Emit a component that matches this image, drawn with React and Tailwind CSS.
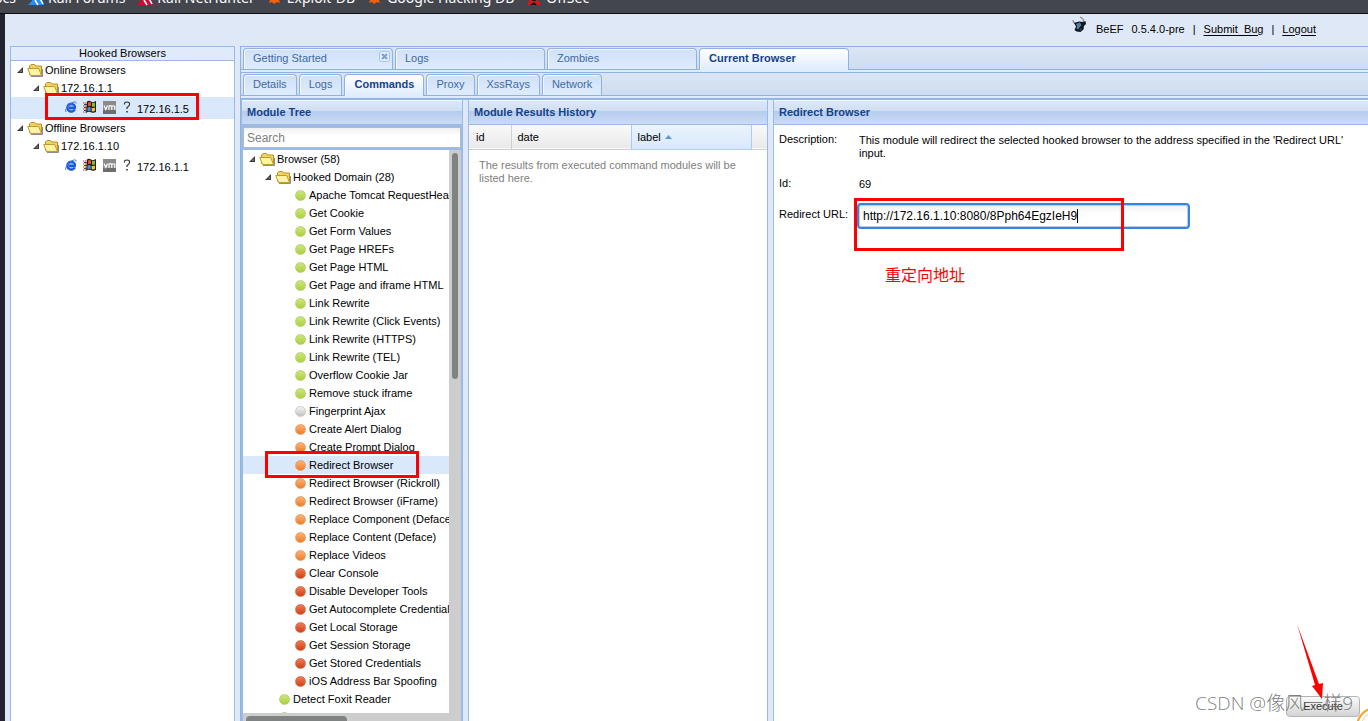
import React, {useState} from 'react';

const mainTabs = ['Getting Started', 'Logs', 'Zombies', 'Current Browser']
const subTabs = ['Details', 'Logs', 'Commands', 'Proxy', 'XssRays', 'Network']

const modules = [
  {name: 'Apache Tomcat RequestHeader Example', status: 'green'},
  {name: 'Get Cookie', status: 'green'},
  {name: 'Get Form Values', status: 'green'},
  {name: 'Get Page HREFs', status: 'green'},
  {name: 'Get Page HTML', status: 'green'},
  {name: 'Get Page and iframe HTML', status: 'green'},
  {name: 'Link Rewrite', status: 'green'},
  {name: 'Link Rewrite (Click Events)', status: 'green'},
  {name: 'Link Rewrite (HTTPS)', status: 'green'},
  {name: 'Link Rewrite (TEL)', status: 'green'},
  {name: 'Overflow Cookie Jar', status: 'green'},
  {name: 'Remove stuck iframe', status: 'green'},
  {name: 'Fingerprint Ajax', status: 'grey'},
  {name: 'Create Alert Dialog', status: 'orange'},
  {name: 'Create Prompt Dialog', status: 'orange'},
  {name: 'Redirect Browser', status: 'orange'},
  {name: 'Redirect Browser (Rickroll)', status: 'orange'},
  {name: 'Redirect Browser (iFrame)', status: 'orange'},
  {name: 'Replace Component (Deface)', status: 'orange'},
  {name: 'Replace Content (Deface)', status: 'orange'},
  {name: 'Replace Videos', status: 'orange'},
  {name: 'Clear Console', status: 'red'},
  {name: 'Disable Developer Tools', status: 'red'},
  {name: 'Get Autocomplete Credentials', status: 'red'},
  {name: 'Get Local Storage', status: 'red'},
  {name: 'Get Session Storage', status: 'red'},
  {name: 'Get Stored Credentials', status: 'red'},
  {name: 'iOS Address Bar Spoofing', status: 'red'},
]

const statusColors = {
  green: 'from-[#cfe57c] to-[#a9d135] border-[#b9cf7c]',
  grey: 'from-[#f4f4f4] to-[#c2c2c2] border-[#cccccc]',
  orange: 'from-[#fbb273] to-[#f07c1c] border-[#e5a272]',
  red: 'from-[#ee7a55] to-[#d23d0c] border-[#d4755a]',
}

const Arrow = () => (
  <svg className={'w-4 h-4 shrink-0'} viewBox="0 0 16 16">
    <path d="M12 5v6H6z" fill="#3a3a3a"/>
    <path d="M11 7.500v2.500H8.500z" fill="#777"/>
  </svg>
)

const Folder = () => (
  <svg className={'w-4 h-4 shrink-0'} viewBox="0 0 16 16">
    <path d="M15.500 7v7.500H4" fill="none" stroke="#8d8d8d"/>
    <path d="M2.500 12.500V4L4 2.500h3.500L9 4h5.500v9.500h-11z" fill="#f0d35c" stroke="#b8902a"/>
    <path d="M3.500 13.500L.7 6.500h11l2.800 7z" fill="#fff3a6" stroke="#c39a30"/>
  </svg>
)

const Explorer = () => (
  <svg className={'w-3 h-3'} viewBox="0 0 12 12">
    <circle cx="6" cy="6.500" r="5" fill="#8db8f5"/>
    <path d="M9.800 8.500A3.900 3.900 0 1 1 10 5.500L9.800 6.800H4" fill="none" stroke="#1e58d6" strokeWidth="2.200"/>
    <path d="M1 11C-.5 9 3 4 7 1.800C9 .6 11.500 .3 11 2.600" fill="none" stroke="#3f7ce4"/>
  </svg>
)

const Windows = () => (
  <svg className={'w-[14px] h-[14px]'} viewBox="0 0 14 14">
    <path d="M4 1.500Q6 0 8 1.500T13 1v11q-2.500 1.500-5 .3T3 13z" fill="#221d18"/>
    <path d="M5 2.500q1.500-1 3 0v3.800q-1.500-1-3 0z" fill="#f0501c"/>
    <path d="M9 2.800q1.500 .6 3-.2v3.800q-1.500 .8-3 .2z" fill="#7cc034"/>
    <path d="M4.500 7.500q1.500-1 3.200 0v3.700q-1.500-1-3.200 0z" fill="#4a8bea"/>
    <path d="M8.700 7.700q1.500 .6 3.200-.2v3.600q-1.500 .8-3.200 .2z" fill="#f7c72e"/>
    <path d="M0 3h4M0 6h4M0 9h4M0 12h4" stroke="#d2401c" strokeDasharray="1.500 .5"/>
    <path d="M1 4.500h3M1 7.500h3M1 10.500h3" stroke="#444"/>
  </svg>
)

const VmWare = () => (
  <svg className={'w-[13px] h-[13px]'} viewBox="0 0 13 13">
    <path d="M0 0h13v13H0z" fill="#8b8b8b"/>
    <path d="M0 9h13v4H0z" fill="#6d6d6d"/>
    <path d="M1 4.500l1.800 4L4.500 4.500M6 9V5q1.500-.8 2.800 .5V9V5.500Q10.500 4 11.800 5.500V9" fill="none" stroke="#fff" strokeWidth="1.200"/>
  </svg>
)

const Question = () => (
  <svg className={'w-2 h-3'} viewBox="0 0 8 12">
    <path d="M1.500 3.500Q1 1 4 1T6.500 3.500Q6.500 5 4 6.500V8" fill="none" stroke="#333" strokeWidth="1.200"/>
    <path d="M3.200 10h1.600v1.500H3.200z" fill="#333"/>
  </svg>
)

const BullLogo = () => (
  <svg className={'w-4 h-[17px]'} viewBox="0 0 16 17">
    <path d="M1 4Q1 8 5 7M11 6Q13 3.500 8 1" fill="none" stroke="#8a8f95" strokeWidth="1.300"/>
    <path d="M2 7L7 5.500l4 .5L13.500 5l.5 3-2 2-.5 3.500-3 2.500-4-.5L2.500 14l1.500-3.500z" fill="#101722"/>
    <path d="M4 8L8 6.500 9.500 9 7.500 11.500 6 13.500l-1.500-1 .5-2.500z" fill="#4d7f9d"/>
    <path d="M9 12l1 2L7.500 15z" fill="#3b4650"/>
  </svg>
)

const KaliMark = ({color}) => (
  <svg className={'w-4 h-4'} viewBox="0 0 16 16">
    <path d="M3 1h8l5 14H0l4-4z" fill={color}/>
    <path d="M4 3q6 1 11 11M7 10l3 5" fill="none" stroke="#fff" strokeWidth="1.500"/>
  </svg>
)

const BugMark = () => (
  <svg className={'w-4 h-4'} viewBox="0 0 16 16">
    <path d="M3 6l4 1 4-3 1 3 3 1-3 2 1 3-3-1-3 2-2-2-3 1 1-3-2-2z" fill="#f2600c"/>
  </svg>
)

const OffSecMark = () => (
  <svg className={'w-4 h-4'} viewBox="0 0 16 16">
    <path d="M7 1L15 15H1z" fill="#d8131b"/>
    <path d="M8 7l2 4H6zM4 15l4-3 3 3z" fill="#111"/>
  </svg>
)

const bookmarks = [
  {name: 'Kali Forums', icon: <KaliMark color="#2b8cf0"/>},
  {name: 'Kali NetHunter', icon: <KaliMark color="#c4122f"/>},
  {name: 'Exploit-DB', icon: <BugMark/>},
  {name: 'Google Hacking DB', icon: <BugMark/>},
  {name: 'OffSec', icon: <OffSecMark/>},
]

const TreeBranch = ({name, indent}) => (
  <div className={'flex h-[18px] items-center ' + (indent ? 'pl-4' : '')}>
    <Arrow/>
    <Folder/>
    <span className={'pl-0.5 whitespace-nowrap'}>{name}</span>
  </div>
)

const Zombie = ({ip, selected}) => (
  <div className={'flex h-[22px] pl-[54px] ' + (selected ? 'bg-[#d9e8fb]' : '')}>
    <span className={'flex h-5 items-center'}>
      <span className={'w-[18px]'}><Explorer/></span>
      <span className={'w-5'}><Windows/></span>
      <span className={'w-5'}><VmWare/></span>
      <span className={'w-[14px]'}><Question/></span>
    </span>
    <span className={'self-end leading-5'}>{ip}</span>
  </div>
)

const Module = ({name, status, selected, indent}) => (
  <div className={'flex h-[18px] items-center ' + (indent ? 'pl-[52px] ' : 'pl-9 ') + (selected ? 'bg-[#d9e8fb]' : '')}>
    <span className={'w-[11px] h-[11px] mt-px shrink-0 rounded-full border bg-linear-to-b ' + statusColors[status]}/>
    <span className={'pl-[3px] whitespace-nowrap'}>{name}</span>
  </div>
)

const Panel = ({title, className, children}) => (
  <section className={'flex flex-col min-w-0 border-[#99bbe8] bg-white ' + className}>
    <h2 className={'h-[25px] shrink-0 border-b border-[#99bbe8] bg-[linear-gradient(#dfe9f6,#cfdff2_44%,#b5ccee_46%,#cbdbf3)] pl-[5px] font-bold leading-[24px] text-[#15428b] shadow-[inset_0_1px_0_#f2f7fd]'}>
      {title}
    </h2>
    {children}
  </section>
)

const App = () => {
  const [tab, setTab] = useState('Current Browser')
  const [subTab, setSubTab] = useState('Commands')
  const [selected, setSelected] = useState('Redirect Browser')
  const [url, setUrl] = useState('http://172.16.1.10:8080/8Pph64EgzIeH9')

  return (
    <div className={"relative flex h-screen flex-col overflow-hidden bg-[#dfe8f6] text-[11px] text-black font-['Liberation_Sans',Arial,sans-serif]"}>
      <nav className={"flex h-[14px] shrink-0 items-end overflow-hidden border-b border-[#0c0c0e] bg-[#44464e] text-sm text-[#fbfbfe] font-['Noto_Sans',sans-serif]"}>
        <div className={'flex h-[30px] items-center gap-3'}>
          <a href="#docs" className={'w-4 overflow-hidden [direction:rtl] whitespace-nowrap'}>Kali Docs</a>
          {
            bookmarks.map(item => (
              <a key={item.name} href="#bookmark" className={'flex items-center gap-1 whitespace-nowrap'}>
                {item.icon}
                {item.name}
              </a>
            ))
          }
        </div>
      </nav>

      <div className={'flex min-h-0 flex-1 flex-col border-l-[5px] border-[#21232e]'}>
        <header className={'flex h-8 shrink-0 items-center justify-end gap-2 pr-[52px] pb-0.5'}>
          <span className={'self-start pt-0.5'}><BullLogo/></span>
          <span>BeEF</span>
          <span>0.5.4.0-pre</span>
          <span>|</span>
          <a href="#bug" className={'underline whitespace-pre underline-offset-2'}>Submit  Bug</a>
          <span>|</span>
          <a href="#logout" className={'underline underline-offset-2'}>Logout</a>
        </header>

        <div className={'flex min-h-0 flex-1 gap-[5px] pl-[5px]'}>
          <aside className={'flex w-[225px] shrink-0 flex-col border border-b-0 border-[#99bbe8] bg-white'}>
            <h2 className={'h-[14px] shrink-0 border-b border-[#99bbe8] bg-[#dfebfb] text-center leading-[13px]'}>
              Hooked Browsers
            </h2>
            <TreeBranch name="Online Browsers"/>
            <TreeBranch name="172.16.1.1" indent/>
            <Zombie ip="172.16.1.5" selected/>
            <TreeBranch name="Offline Browsers"/>
            <TreeBranch name="172.16.1.10" indent/>
            <Zombie ip="172.16.1.1"/>
          </aside>

          <main className={'flex min-w-0 flex-1 flex-col border-t border-l border-[#8db2e3]'}>
            <div className={'flex h-[26px] shrink-0 items-start gap-0.5 border-b border-[#8db2e3] bg-linear-to-b from-[#dce6f5] to-[#cbdbef] pt-px pl-0.5 shadow-[inset_0_-2px_0_#deecfd,inset_0_-3px_0_#8db2e3]'}>
              {
                mainTabs.map((name, key) => (
                  <button key={name}
                          onClick={() => setTab(name)}
                          className={'flex w-[150px] items-start justify-between rounded-t border border-b-0 border-[#8db2e3] pl-[9px] pr-0.5 text-left leading-[19px] shadow-[inset_1px_1px_0_#f5f9ff] bg-linear-to-b ' + (tab === name ? 'h-[22px] from-white to-[#deecfd] font-bold text-[#15428b]' : 'h-[21px] from-[#d0e0f6] to-[#deecfd] text-[#416aa3]')}>
                    {name}
                    {
                      key === 0 && (
                        <svg className={'mt-0.5 w-[11px] h-[11px]'} viewBox="0 0 11 11">
                          <rect x=".5" y=".5" width="10" height="10" rx="2" fill="#e6effb" stroke="#a6c3ea"/>
                          <path d="M3 3l5 5M8 3L3 8" stroke="#7a9fd2" strokeWidth="2"/>
                        </svg>
                      )
                    }
                  </button>
                ))
              }
            </div>
            <div className={'flex h-[26px] shrink-0 items-start gap-0.5 border-b border-[#8db2e3] bg-linear-to-b from-[#dce6f5] to-[#cbdbef] pt-px pl-0.5 shadow-[inset_0_-2px_0_#deecfd,inset_0_-3px_0_#8db2e3]'}>
              {
                subTabs.map(name => (
                  <button key={name}
                          onClick={() => setSubTab(name)}
                          className={'flex items-start rounded-t border border-b-0 border-[#8db2e3] px-[9px] leading-[19px] shadow-[inset_1px_1px_0_#f5f9ff] bg-linear-to-b ' + (subTab === name ? 'h-[22px] from-white to-[#deecfd] font-bold text-[#15428b]' : 'h-[21px] from-[#d0e0f6] to-[#deecfd] text-[#416aa3]')}>
                    {name}
                  </button>
                ))
              }
            </div>

            <div className={'flex min-h-0 flex-1 gap-[5px] border-t border-[#99bbe8]'}>
              <Panel title="Module Tree" className={'w-[222px] shrink-0 border-x'}>
                <div className={'flex min-h-0 flex-1 flex-col border-x border-t-2 border-[#99bbe8] bg-[#99bbe8]'}>
                  <input aria-label="Search" placeholder="Search"
                         className={'mb-0.5 h-[21px] w-full shrink-0 border border-[#b5b8c8] bg-linear-to-b from-[#f0f0f0] to-white to-40% px-[3px] text-xs outline-none placeholder:text-[#808080]'}/>
                  <div className={'flex min-h-0 flex-1 bg-[#cdcdcd]'}>
                    <div className={'flex min-w-0 flex-1 flex-col'}>
                      <div className={'min-h-0 flex-1 overflow-hidden bg-white'}>
                        <TreeBranch name="Browser (58)"/>
                        <TreeBranch name="Hooked Domain (28)" indent/>
                        {
                          modules.map(item => (
                            <div key={item.name} onClick={() => setSelected(item.name)}>
                              <Module {...item} indent selected={selected === item.name}/>
                            </div>
                          ))
                        }
                        <Module name="Detect Foxit Reader" status="green"/>
                        <Module name="" status="green"/>
                      </div>
                      <div className={'h-2 shrink-0 pt-[3px] pl-[3px]'}>
                        <div className={'h-[5px] w-[101px] rounded-t bg-[#7f8382]'}/>
                      </div>
                    </div>
                    <div className={'w-3 shrink-0 pt-[3px] pl-[3px]'}>
                      <div className={'h-[226px] w-1.5 rounded-full bg-[#7f8382]'}/>
                    </div>
                  </div>
                </div>
              </Panel>

              <Panel title="Module Results History" className={'w-[300px] shrink-0 border-x'}>
                <table className={'w-full table-fixed text-left'}>
                  <thead>
                    <tr className={'h-6 border-b border-[#d0d0d0] bg-linear-to-b from-[#f9f9f9] to-[#eaeaea]'}>
                      <th scope="col" className={'w-[42px] border-r border-[#d0d0d0] pl-[7px] font-normal'}>id</th>
                      <th scope="col" className={'w-[120px] border-r border-[#aaccf6] pl-1.5 font-normal'}>date</th>
                      <th scope="col"
                          className={'w-[120px] border-r border-b border-[#aaccf6] bg-linear-to-b from-[#ebf3fd] to-[#d9e8fb] pl-1.5 font-normal'}>
                        <span className={'flex items-center gap-1'}>
                          label
                          <svg className={'w-[7px] h-1'} viewBox="0 0 7 4"><path d="M0 4L3.500 0L7 4z" fill="#5f97d8"/></svg>
                        </span>
                      </th>
                      <th/>
                    </tr>
                  </thead>
                </table>
                <p className={'px-[10px] py-[9px] leading-[13px] text-[#808080]'}>
                  The results from executed command modules will be listed here.
                </p>
              </Panel>

              <Panel title="Redirect Browser" className={'relative flex-1 border-l'}>
                <div className={'grid grid-cols-[80px_1fr] items-start gap-y-[17px] py-2 pl-[5px] pr-2 leading-[13px]'}>
                  <span>Description:</span>
                  <p className={'pt-px'}>
                    This module will redirect the selected hooked browser to the address specified in the 'Redirect URL' input.
                  </p>
                  <span>Id:</span>
                  <span className={'pt-px'}>69</span>
                  <label htmlFor="url" className={'whitespace-nowrap'}>Redirect URL:</label>
                  <div className={'relative -ml-0.5 -mt-[5px] w-[333px]'}>
                    <input id="url" value={url} onChange={e => setUrl(e.target.value)}
                           className={'block h-[26px] w-full rounded-sm border-2 border-[#3584e4] bg-linear-to-b from-[#f0f0f0] to-white to-40% px-1 text-xs shadow-[inset_0_0_0_1px_#b5cdee] outline-none'}/>
                    <span className={'absolute left-[220px] top-[6px] h-[14px] w-px bg-black'}/>
                  </div>
                </div>
                <button className={'absolute right-2 bottom-1 h-[21px] w-[74px] rounded-sm border border-[#b4b4b4] bg-linear-to-b from-[#fafafa] to-[#d4d4d4] text-[#333]'}>
                  Execute
                </button>
                <svg className={'absolute right-0 bottom-0 h-5 w-3'} viewBox="0 0 12 20">
                  <circle cx="20" cy="26" r="19" fill="#fff" stroke="#f7a32b" strokeWidth="2"/>
                  <circle cx="20" cy="26" r="15" fill="none" stroke="#fbd08c"/>
                </svg>
              </Panel>
            </div>
          </main>
        </div>
      </div>

      {/* notes drawn over the page */}
      <div className={'pointer-events-none absolute inset-0'}>
        <div className={'absolute left-[45px] top-[93px] h-[27px] w-[154px] border-3 border-[#ff0000]'}/>
        <div className={'absolute left-[265px] top-[451px] h-[27px] w-[154px] border-3 border-[#ff0000]'}/>
        <div className={'absolute left-[854px] top-[198px] h-[53px] w-[270px] border-3 border-[#ff0000]'}/>
        <span className={"absolute left-[885px] top-[262px] text-base leading-6 text-[#ff0000] font-['Noto_Sans_CJK_SC',sans-serif]"}>重定向地址</span>
        <span className={"absolute right-[15px] bottom-[6px] whitespace-nowrap text-[19px] leading-6 font-light text-[#707070]/90 font-['Open_Sans','Noto_Sans_CJK_SC',sans-serif]"}>CSDN @像风一样9</span>
        <svg className={'absolute right-[43px] bottom-[21px] h-[76px] w-[30px]'} viewBox="0 0 30 76">
          <path d="M2 0L24 60l4-1-1 16L17 62l3-1z" fill="#ff0000"/>
        </svg>
      </div>
    </div>
  );
};

export default App;
